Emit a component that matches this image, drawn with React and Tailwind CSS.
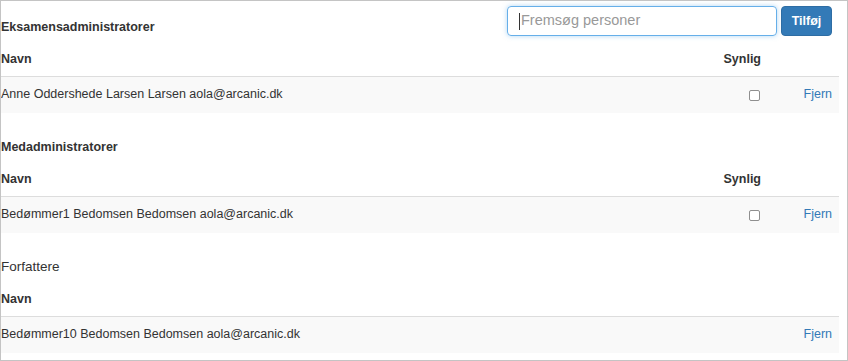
import React from "react";

const sections = [
  {
    title: "Eksamensadministratorer",
    bold: true,
    search: true,
    visible: true,
    rows: ["Anne Oddershede Larsen Larsen aola@arcanic.dk"],
  },
  {
    title: "Medadministratorer",
    bold: true,
    visible: true,
    rows: ["Bedømmer1 Bedomsen Bedomsen aola@arcanic.dk"],
  },
  {
    title: "Forfattere",
    bold: false,
    visible: false,
    rows: ["Bedømmer10 Bedomsen Bedomsen aola@arcanic.dk"],
  },
];

function Checkbox() {
  return <span className="block w-[11px] h-[11px] border border-[#8f8f8f] rounded-[2px] bg-white" />;
}

function Section({ section }) {
  return (
    <div className="mb-[8px]">
      {/* Title + search */}
      <div className="h-[41px] flex items-start justify-between">
        <div className={`mt-[16px] leading-[20px] ${section.bold ? "font-bold" : "text-[13.5px]"}`}>{section.title}</div>
        {section.search && (
          <div className="flex gap-[4px] mt-[5px] mr-[7px]">
            <div className="w-[270px] h-[30px] border border-[#66afe9] rounded-[4px] shadow-[0_0_5px_rgba(102,175,233,0.5)] flex items-center pl-[11px] text-[14.5px] text-[#999]">
              <span className="w-px h-[17px] bg-[#333] mr-px" />
              Fremsøg personer
            </div>
            <button className="w-[51px] h-[30px] bg-[#337ab7] border border-[#2e6da4] rounded-[4px] text-white font-bold">
              Tilføj
            </button>
          </div>
        )}
      </div>
      {/* Header */}
      <div className="h-[35px] flex items-center border-b border-[#ddd] font-bold">
        <div className="flex-1">Navn</div>
        {section.visible && <div className="w-[80px] text-right pr-[8px]">Synlig</div>}
        <div className="w-[70px]" />
      </div>
      {section.rows.map((r) => (
        <div key={r} className="h-[36px] flex items-center bg-[#f9f9f9] pb-[2px]">
          <div className="flex-1">{r}</div>
          {section.visible && (
            <div className="w-[80px] flex justify-end pr-[9px] pt-[3px]">
              <Checkbox />
            </div>
          )}
          <div className="w-[70px] text-right pr-[7px] text-[#337ab7]">Fjern</div>
        </div>
      ))}
    </div>
  );
}

export default function App() {
  return (
    <div className="w-[848px] h-[361px] border border-[#c4c4c4] overflow-hidden bg-white text-[12.5px] text-[#333] font-['Liberation_Sans',Arial,sans-serif]">
      <div className="pr-[8px]">
        {sections.map((s) => (
          <Section key={s.title} section={s} />
        ))}
      </div>
    </div>
  );
}
